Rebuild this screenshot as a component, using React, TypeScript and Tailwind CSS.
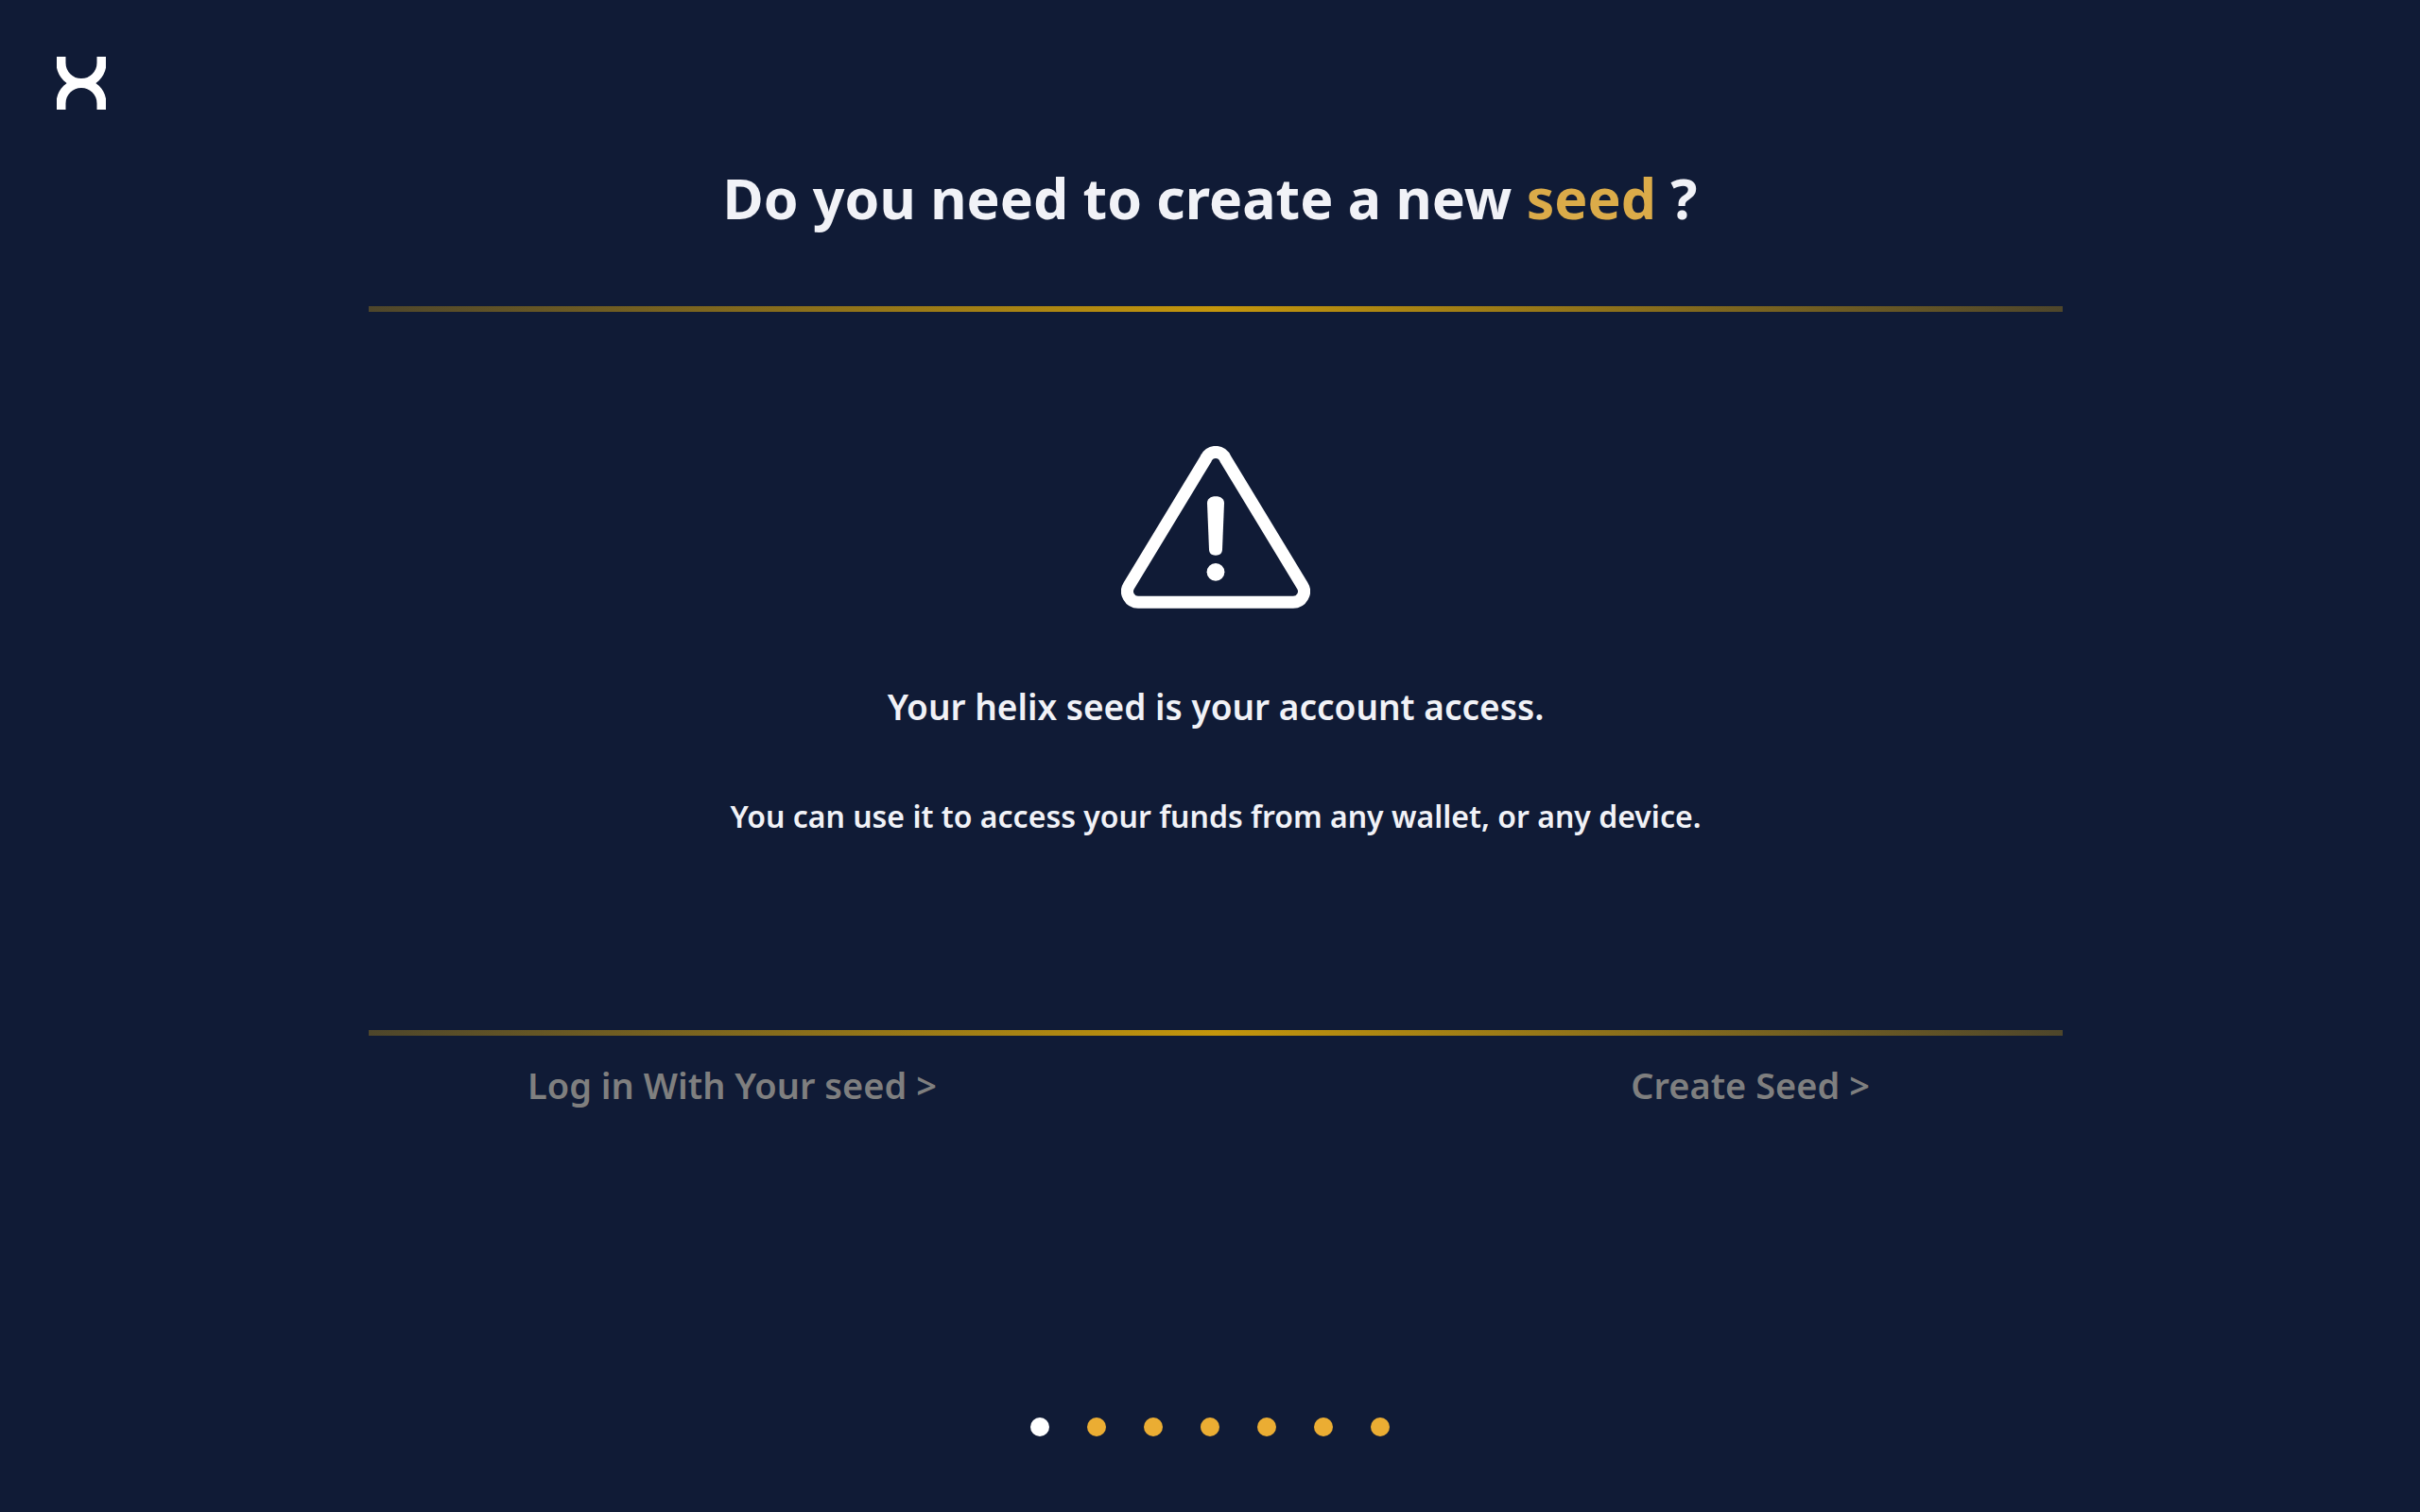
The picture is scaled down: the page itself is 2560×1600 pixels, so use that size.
const STEPS = 7;

function Logo() {
  return (
    <svg viewBox="0 0 52 56" className="h-14 w-[52px]" fill="none" stroke="#ffffff" strokeWidth="10" role="img" aria-label="Helix">
      <path d="M4.5 0V6.5A21.5 21.5 0 0 0 47.5 6.5V0" />
      <path d="M4.5 56V49.5A21.5 21.5 0 0 1 47.5 49.5V56" />
    </svg>
  );
}

function WarningIcon() {
  return (
    <svg viewBox="0 0 200 172" className="h-[172px] w-[200px]" fill="#ffffff" aria-hidden="true">
      <path
        d="M89.6 13.6A11.1 11.1 0 0 1 110.4 13.6L191.8 147.8A11.5 11.5 0 0 1 182 165.3H18A11.5 11.5 0 0 1 8.2 147.8Z"
        fill="none"
        stroke="#ffffff"
        strokeWidth="13"
      />
      <path d="M91 60.5C91 56 94.5 53.3 100 53.3S109 56 109 60.5L107 109.5C106.8 113.6 104.4 115.7 100 115.7S93.2 113.6 93 109.5Z" />
      <circle cx="100" cy="133.3" r="9.4" />
    </svg>
  );
}

function Divider() {
  return (
    <div className="h-1.5 w-full bg-[linear-gradient(to_right,#4e462b,#c4960c_50%,#4e462b)]" role="separator" />
  );
}

export default function App() {
  return (
    <div className="flex min-h-screen flex-col bg-[#101b36] pt-[60px] pb-20 font-['Noto_Sans',sans-serif] font-semibold text-[#f1f2f7]">
      <header className="px-[60px]">
        <Logo />
      </header>

      <h1 className="mt-[53px] text-center text-[59px] leading-[80px] font-bold">
        Do you need to create a new <span className="text-[#dbab49]">seed</span> ?
      </h1>

      <main className="mt-[75px] ml-[calc(15%+6px)] w-[70%]">
        <Divider />
        <section className="flex flex-col items-center pt-[142px] pb-[206px] text-center">
          <WarningIcon />
          <h2 className="mt-20 text-[37px] leading-[48px]">Your helix seed is your account access.</h2>
          <p className="mt-[72px] text-[32px] leading-[40px]">
            You can use it to access your funds from any wallet, or any device.
          </p>
        </section>
        <Divider />
        <nav className="mt-7 flex justify-between pr-[204px] pl-[168px] text-[38px] leading-[48px] text-[#7f7f7f]">
          <a href="#login">Log in With Your seed &gt;</a>
          <a href="#create">Create Seed &gt;</a>
        </nav>
      </main>

      <footer className="mt-auto flex justify-center gap-10">
        {Array.from({ length: STEPS }, (_, i) => (
          <button
            key={i}
            type="button"
            aria-label={`Step ${i + 1}`}
            aria-current={i === 0 ? "step" : undefined}
            className={i === 0 ? "size-5 rounded-full bg-white" : "size-5 rounded-full bg-[#ebad33]"}
          />
        ))}
      </footer>
    </div>
  );
}
